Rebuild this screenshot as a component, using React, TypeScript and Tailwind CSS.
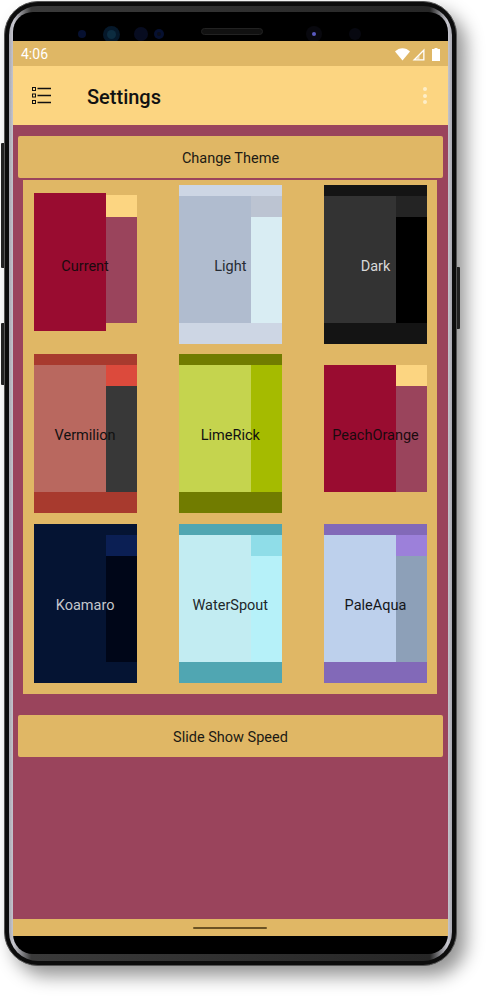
import React from "react";

type Theme = {
  name: string;
  header?: string;
  main: string;
  accent: string;
  side: string;
  text: string;
  variant?: "current" | "peach";
};

const themes: Theme[] = [
  { name: "Current", main: "bg-[#990c30]", accent: "bg-[#fcd581]", side: "bg-[#9a445c]", text: "text-[#1a0a0e]", variant: "current" },
  { name: "Light", header: "bg-[#cdd6e4]", main: "bg-[#b0bccf]", accent: "bg-[#bcc4d2]", side: "bg-[#d9edf3]", text: "text-[#262b33]" },
  { name: "Dark", header: "bg-[#141414]", main: "bg-[#333333]", accent: "bg-[#242424]", side: "bg-[#000000]", text: "text-[#d8d8d8]" },
  { name: "Vermilion", header: "bg-[#a83a2e]", main: "bg-[#b9685f]", accent: "bg-[#dc4a3c]", side: "bg-[#383838]", text: "text-[#111111]" },
  { name: "LimeRick", header: "bg-[#717c00]", main: "bg-[#c5d44e]", accent: "bg-[#a5bb00]", side: "bg-[#a5bb00]", text: "text-[#111111]" },
  { name: "PeachOrange", main: "bg-[#990c30]", accent: "bg-[#fcd581]", side: "bg-[#9a445c]", text: "text-[#1a0a0e]", variant: "peach" },
  { name: "Koamaro", header: "bg-[#051433]", main: "bg-[#051433]", accent: "bg-[#0b1f54]", side: "bg-[#000618]", text: "text-[#c4c6cc]" },
  { name: "WaterSpout", header: "bg-[#50a6b2]", main: "bg-[#c2ecf2]", accent: "bg-[#8fdde8]", side: "bg-[#b6f1f9]", text: "text-[#20282a]" },
  { name: "PaleAqua", header: "bg-[#8269b8]", main: "bg-[#bdd0ec]", accent: "bg-[#9c80da]", side: "bg-[#8da0b8]", text: "text-[#14161a]" },
];

function CardLabel({ t }: { t: Theme }) {
  return (
    <span className={`absolute inset-x-0 top-[72px] text-center text-[14.5px] leading-[20px] ${t.text}`}>{t.name}</span>
  );
}

function ThemeCard({ t }: { t: Theme }) {
  if (t.variant === "current") {
    return (
      <div className="relative flex h-[159px] w-[103px] pt-[8px]">
        <div className={`h-[138px] w-[72px] ${t.main}`} />
        <div className="flex h-[130px] w-[31px] flex-col pt-[2px]">
          <div className={`h-[22px] ${t.accent}`} />
          <div className={`flex-1 ${t.side}`} />
        </div>
        <CardLabel t={t} />
      </div>
    );
  }
  if (t.variant === "peach") {
    return (
      <div className="relative flex h-[159px] w-[103px] pt-[11px]">
        <div className={`h-[127px] w-[72px] ${t.main}`} />
        <div className="flex h-[127px] w-[31px] flex-col">
          <div className={`h-[21px] ${t.accent}`} />
          <div className={`flex-1 ${t.side}`} />
        </div>
        <CardLabel t={t} />
      </div>
    );
  }
  return (
    <div className="relative flex h-[159px] w-[103px] flex-col">
      <div className={`h-[11px] ${t.header}`} />
      <div className="flex h-[127px]">
        <div className={`w-[72px] ${t.main}`} />
        <div className="flex w-[31px] flex-col">
          <div className={`h-[21px] ${t.accent}`} />
          <div className={`flex-1 ${t.side}`} />
        </div>
      </div>
      <div className={`h-[21px] ${t.header}`} />
      <CardLabel t={t} />
    </div>
  );
}

function StatusIcons() {
  return (
    <div className="flex items-center">
      <svg width="15" height="13" viewBox="0 0 15 13"><path d="M0 3.6 C4 -0.9 11 -0.9 15 3.6 L7.5 12.5 Z" fill="#fff" /></svg>
      <svg className="ml-[2px]" width="13" height="13" viewBox="0 0 13 13">
        <path d="M12.5 0.5 V12.5 H0.5 Z M11.2 3.8 L3.8 11.2 H11.2 Z" fill="#fff" fillRule="evenodd" />
        <path d="M7.5 11.2 V7.5 L3.8 11.2 Z" fill="#fff" opacity="0.55" />
      </svg>
      <svg className="ml-[7px]" width="8" height="13" viewBox="0 0 8 13"><path d="M2.5 0 H5.5 V1 H8 V13 H0 V1 H2.5 Z" fill="#fff" /></svg>
    </div>
  );
}

function ListIcon() {
  return (
    <svg width="20" height="18" viewBox="0 0 20 18" fill="none" stroke="#111" strokeWidth="1">
      <rect x="0.5" y="0.5" width="3" height="3" />
      <rect x="0.5" y="7" width="3" height="3" />
      <rect x="0.5" y="13.5" width="3" height="3" />
      <path d="M5.5 1.5 H19 M5.5 8.5 H19 M5.5 15.5 H19" strokeWidth="1.4" />
    </svg>
  );
}

function Bar({ label }: { label: string }) {
  return (
    <div className="flex h-[42px] items-center justify-center rounded-[2px] bg-[#e0b765] pt-[4px] text-[14.5px] text-[#1c1a14]">
      {label}
    </div>
  );
}

export default function App() {
  return (
    <div className="h-[997px] w-[499px] overflow-hidden bg-white pl-[4px] pt-[1px] font-['Roboto',sans-serif]">
      {/* outer metal ring */}
      <div className="relative h-[965px] w-[453px] rounded-[34px] border border-[#555555] bg-[#0c0c0c] p-[4px] shadow-[9px_10px_18px_rgba(0,0,0,0.42)]">
        {/* side keys */}
        <div className="absolute left-[-4px] top-[141px] h-[125px] w-[3px] rounded-l-[1px] bg-[#222]" />
        <div className="absolute left-[-4px] top-[321px] h-[62px] w-[3px] rounded-l-[1px] bg-[#222]" />
        <div className="absolute right-[-4px] top-[265px] h-[62px] w-[3px] rounded-r-[1px] bg-[#222]" />

        {/* glass edge */}
        <div className="h-full rounded-[29px] bg-[linear-gradient(to_right,#a8a8b0_0%,#c8c8d0_1%,#3a3a3a_5%,#262626_95%,#c8c8d0_99%,#a8a8b0_100%)] px-[4px] pb-[7px] pt-[6px]">
          <div className="flex h-full flex-col rounded-[20px] bg-black">
            {/* top bezel */}
            <div className="flex h-[29px] shrink-0 items-center pl-[65px] pt-[15px]">
              <div className="h-[8px] w-[8px] rounded-full bg-[#061030]" />
              <div className="ml-[17px] flex h-[17px] w-[17px] items-center justify-center rounded-full bg-[#05182a]">
                <div className="h-[9px] w-[9px] rounded-full bg-[#0c2c40]" />
              </div>
              <div className="ml-[14px] h-[14px] w-[14px] rounded-full bg-[#070c20]" />
              <div className="ml-[6px] flex h-[10px] w-[10px] items-center justify-center rounded-full bg-[#061030]">
                <div className="h-[4px] w-[4px] rounded-full bg-[#0a0c18]" />
              </div>
              <div className="mb-[6px] ml-[37px] h-[7px] w-[62px] rounded-full border border-[#222] bg-[#111]" />
              <div className="ml-[43px] flex h-[16px] w-[16px] items-center justify-center rounded-full bg-[#08080e]">
                <div className="h-[4px] w-[4px] rounded-full bg-[#5a5ac0]" />
              </div>
              <div className="ml-[27px] h-[12px] w-[12px] rounded-full bg-[#070810]" />
            </div>

            {/* screen */}
            <div className="flex h-[895px] shrink-0 flex-col">
              <div className="flex h-[25px] items-center justify-between bg-[#dfb765] pl-[8px] pr-[8px] pt-[1px] text-[14px] text-white">
                <span>4:06</span>
                <StatusIcons />
              </div>
              <div className="flex h-[59px] items-center bg-[#fcd581] pl-[19px] pr-[21px]">
                <ListIcon />
                <span className="ml-[35px] pt-[2px] text-[20px] font-medium text-[#111]">Settings</span>
                <div className="ml-auto flex flex-col gap-[2.5px]">
                  <div className="h-[4px] w-[4px] rounded-full bg-[#fdeec8]" />
                  <div className="h-[4px] w-[4px] rounded-full bg-[#fdeec8]" />
                  <div className="h-[4px] w-[4px] rounded-full bg-[#fdeec8]" />
                </div>
              </div>
              <div className="flex flex-1 flex-col bg-[#9a445c] px-[5px] pt-[11px]">
                <Bar label="Change Theme" />
                <div className="ml-[5px] mr-[6px] mt-[2px] grid h-[514px] grid-cols-[103px_103px_103px] content-start justify-between gap-y-[10.4px] bg-[#e0b765] pl-[10.6px] pr-[10px] pt-[5px]">
                  {themes.map((t) => (
                    <ThemeCard key={t.name} t={t} />
                  ))}
                </div>
                <div className="mt-[21px]">
                  <Bar label="Slide Show Speed" />
                </div>
              </div>
              <div className="flex h-[17px] items-center justify-center bg-[#e0b765] pr-[2px]">
                <div className="h-[2px] w-[74px] rounded-full bg-[#6b5224]" />
              </div>
            </div>
          </div>
        </div>
      </div>
    </div>
  );
}
